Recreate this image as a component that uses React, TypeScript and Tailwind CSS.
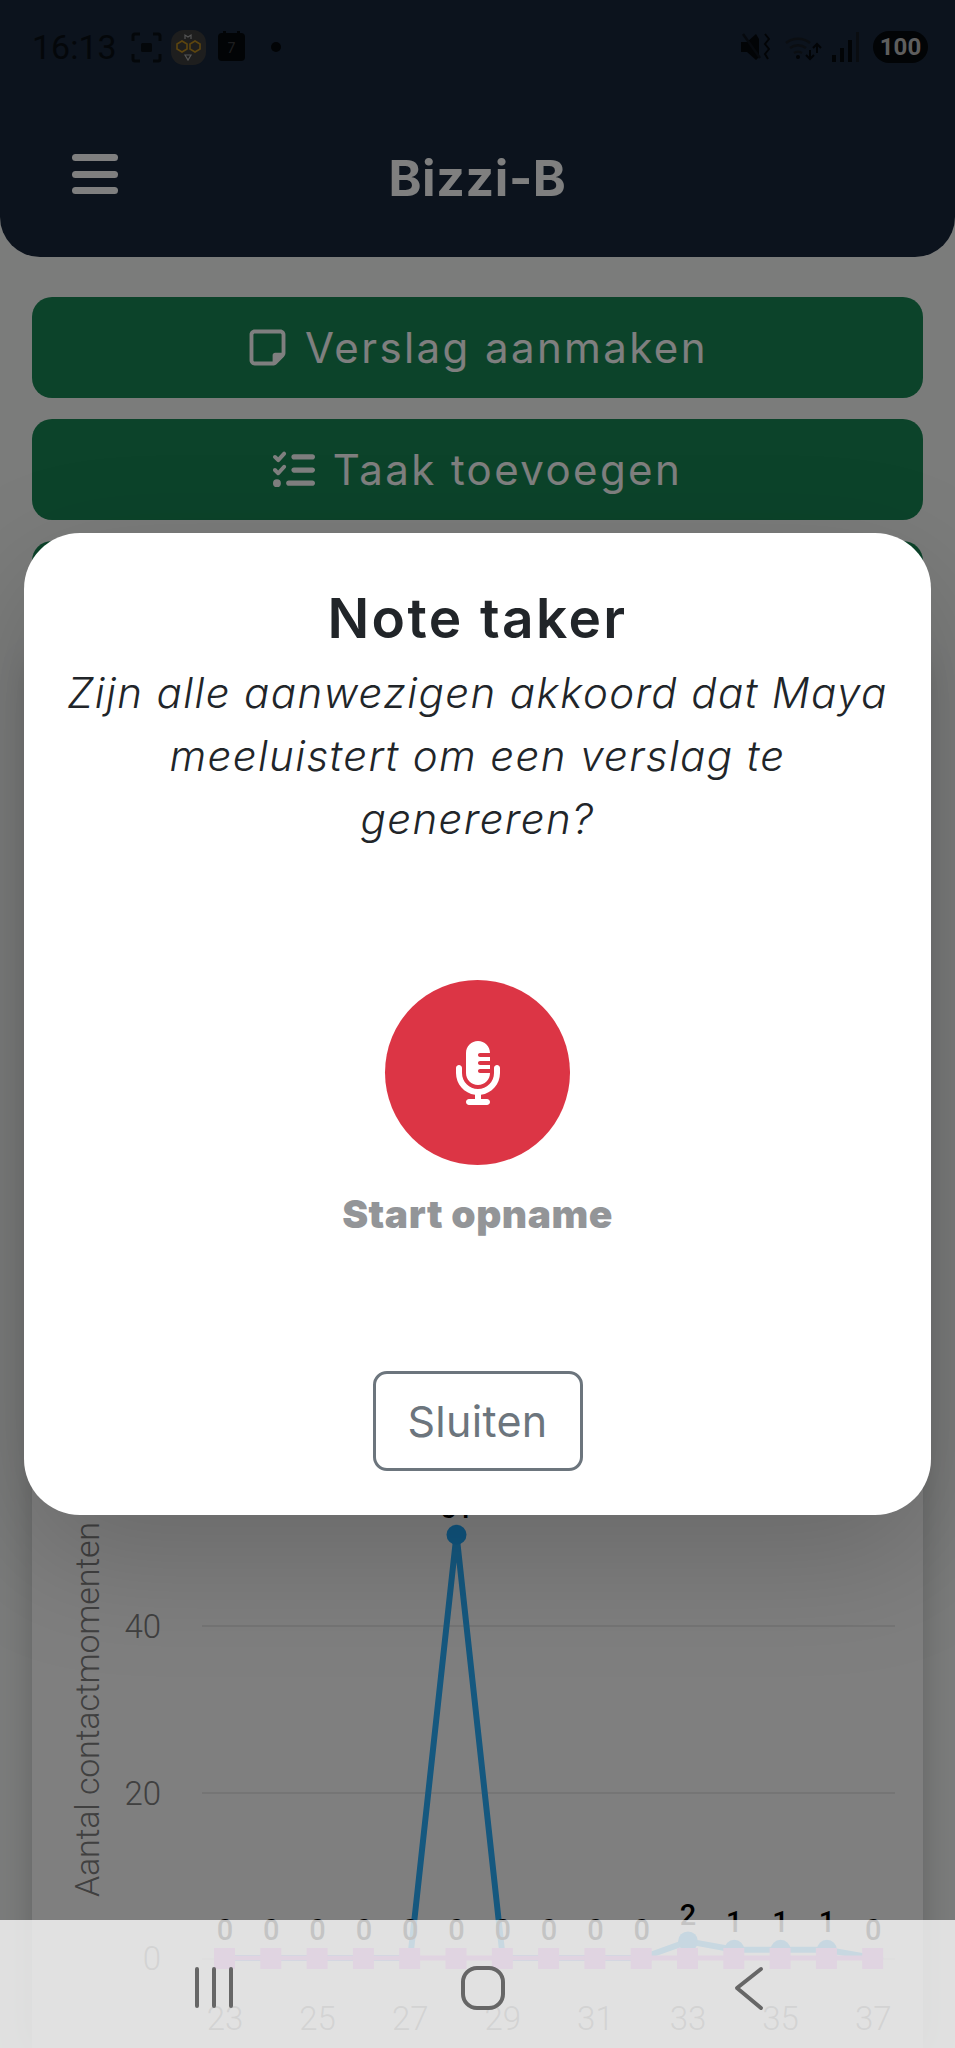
import React from 'react'
import { FaListCheck, FaMicrophoneLines, FaRegNoteSticky } from 'react-icons/fa6'

const FONT = 'font-["Inter","Noto_Sans",sans-serif]'

// chart data: week numbers 23..37
const xAt = (i: number) => 225 + i * 46.3
const yAt = (v: number) => 1958 - v * 8.3
const contacts = [0, 0, 0, 0, 0, 51, 0, 0, 0, 0, 2, 1, 1, 1, 0]

function StatusBar() {
  return (
    <div className="flex h-[94px] items-center justify-between pl-[32px] pr-[27px]">
      <div className="flex items-center">
        <span className='font-["Roboto",sans-serif] text-[34px] leading-none text-[#090e14] w-[100px]'>16:13</span>
        <svg width="31" height="31" viewBox="0 0 31 31" fill="none" stroke="#090e14" strokeWidth="3" className="ml-[-1px]">
          <path d="M2 9V4q0-2 2-2h5M22 2h5q2 0 2 2v5M29 22v5q0 2-2 2h-5M9 29H4q-2 0-2-2v-5" />
          <rect x="10" y="11" width="11" height="9" rx="1.5" fill="#090e14" stroke="none" />
        </svg>
        <svg width="35" height="35" viewBox="0 0 35 35" fill="none" className="ml-[9px]">
          <rect width="35" height="35" rx="13" fill="#3c3c3c" />
          <path d="M11 11l5 3v5l-5 3-5-3v-5zM24 11l5 3v5l-5 3-5-3v-5z" stroke="#b98a1e" strokeWidth="1.6" />
          <path d="M14 9V5l3 2 3-2v4M14 25h6l-3 5z" stroke="#a8a8a8" strokeWidth="1.2" />
        </svg>
        <div className="ml-[12px] relative flex h-[28px] w-[27px] items-center justify-center rounded-[4px] bg-[#05080c] text-[14px] text-[#3a3d40]">
          7
          <span className="absolute -top-[2px] left-[5px] h-[5px] w-[3px] bg-[#05080c]" />
          <span className="absolute -top-[2px] right-[5px] h-[5px] w-[3px] bg-[#05080c]" />
        </div>
        <span className="ml-[26px] size-[10px] rounded-full bg-[#05080c]" />
      </div>
      <div className="flex items-center">
        <svg width="29" height="30" viewBox="0 0 29 30" fill="#05080c">
          <path d="M0 10h6l9-8 3 5v18l-3 3-9-8H0z" />
          <path d="M2 2l17 24" stroke="#0c131c" strokeWidth="2.5" />
          <path d="M24 2l4 5-4 5 4 5-4 5 3 5" fill="none" stroke="#05080c" strokeWidth="2" />
        </svg>
        <svg width="38" height="30" viewBox="0 0 38 30" fill="none" stroke="#161c24" strokeWidth="2.4" className="ml-[14px]">
          <path d="M2 11a19 19 0 0 1 24 0M6 16a13 13 0 0 1 16 0M10 21a7 7 0 0 1 8 0" />
          <path d="M33 12v9M29 16l4-4 4 4M26 18v9M22 23l4 4 4-4" stroke="#05080c" strokeWidth="2" />
          <circle cx="14" cy="25" r="2" fill="#05080c" stroke="none" />
        </svg>
        <svg width="28" height="30" viewBox="0 0 28 30" fill="#05080c" className="ml-[10px]">
          <rect x="0" y="23" width="4" height="7" />
          <rect x="8" y="16" width="4" height="14" />
          <rect x="16" y="8" width="4" height="22" />
          <rect x="24" y="0" width="3" height="30" fill="#151b22" />
        </svg>
        <span className='ml-[13px] flex h-[32px] w-[55px] items-center justify-center rounded-full bg-[#05080c] font-["Roboto",sans-serif] text-[24px] font-bold text-[#bcbcbc]'>100</span>
      </div>
    </div>
  )
}

function Chart() {
  const blue = contacts.map((v, i) => `${xAt(i)},${yAt(v)}`).join(' ')
  return (
    <svg viewBox="32 1448 891 600" width="891" height="600" className="block">
      <line x1="202" x2="895" y1="1626" y2="1626" stroke="#e4e4e4" strokeWidth="1.5" />
      <line x1="202" x2="895" y1="1793" y2="1793" stroke="#e4e4e4" strokeWidth="1.5" />
      <line x1="202" x2="895" y1="1959" y2="1959" stroke="#e4e4e4" strokeWidth="1.5" />
      <g fontFamily="Roboto, sans-serif" fontWeight="300" fontSize="33" fill="#808080">
        <text x="161" y="1638" textAnchor="end">40</text>
        <text x="161" y="1805" textAnchor="end">20</text>
        <text x="161" y="1970" textAnchor="end">0</text>
        {[23, 25, 27, 29, 31, 33, 35, 37].map((w, k) => (
          <text key={w} x={xAt(k * 2)} y="2030" textAnchor="middle">{w}</text>
        ))}
      </g>
      <text
        transform="translate(99 1897) rotate(-90)"
        fontFamily="Roboto, sans-serif"
        fontWeight="300"
        fontSize="34"
        textLength="375"
        fill="#808080"
      >
        Aantal contactmomenten
      </text>
      <polyline points={blue} fill="none" stroke="#2bb0ff" strokeWidth="6" />
      {contacts.map((v, i) => (
        <circle key={i} cx={xAt(i)} cy={yAt(v)} r="10" fill="#20aaff" />
      ))}
      <line x1={xAt(0)} x2={xAt(14)} y1="1958" y2="1958" stroke="#f48aff" strokeWidth="5" />
      {contacts.map((_, i) => (
        <rect key={i} x={xAt(i) - 11} y="1948" width="21" height="21" fill="#f48aff" />
      ))}
      <g fontFamily="Roboto, sans-serif" fontWeight="500" fontSize="29" fill="#000" textAnchor="middle">
        {contacts.map((v, i) => (
          <text key={i} x={xAt(i)} y={v === 2 ? 1925 : v === 1 ? 1932 : 1940}>{v === 51 ? 0 : v}</text>
        ))}
        <text x={xAt(5)} y="1518">51</text>
      </g>
    </svg>
  )
}

function NavBar() {
  return (
    <div className="absolute bottom-0 left-0 right-0 h-[128px] bg-white/[0.77]">
      <svg width="955" height="128" viewBox="0 1920 955 128" fill="none" stroke="#666" strokeWidth="4" strokeLinecap="round" strokeLinejoin="round">
        <path d="M197 1969v37M214 1969v37M231 1969v37" />
        <rect x="463" y="1968" width="40" height="40" rx="14" />
        <path d="M761 1969l-24 19 24 20" />
      </svg>
    </div>
  )
}

export default function App() {
  return (
    <div className={`relative h-[2048px] w-[955px] overflow-hidden bg-[#f6f8f7] ${FONT}`}>
      <div className="flex h-full flex-col">
        <header className="h-[257px] rounded-b-[40px] bg-[#18263a] text-white">
          <StatusBar />
          <div className="grid grid-cols-[1fr_auto_1fr] items-center pt-[58px] pl-[72px]">
            <div className="-mt-[8px] flex flex-col gap-[9.5px]">
              <span className="h-[7px] w-[46px] rounded-full bg-white" />
              <span className="h-[7px] w-[46px] rounded-full bg-white" />
              <span className="h-[7px] w-[46px] rounded-full bg-white" />
            </div>
            <span className="-ml-[72px] text-[50px] font-bold leading-[52px] tracking-[0.6px]">Bizzi-B</span>
          </div>
        </header>
        <main className="flex flex-1 flex-col gap-[21px] px-[32px] pt-[40px]">
          <button className="flex h-[101px] items-center justify-center gap-[17px] rounded-[20px] bg-[#198754] text-[42px] tracking-[2.4px] text-white">
            <FaRegNoteSticky className="size-[41px]" />
            Verslag aanmaken
          </button>
          <button className="flex h-[101px] items-center justify-center gap-[18px] rounded-[20px] bg-[#198754] text-[42px] tracking-[2.4px] text-white">
            <FaListCheck className="size-[42px]" />
            Taak toevoegen
          </button>
          <div className="h-[101px] rounded-[20px] bg-[#198754]" />
          <section className="flex flex-1 items-end bg-white shadow-[0_0_32px_rgba(0,0,0,0.2)]">
            <Chart />
          </section>
        </main>
      </div>

      {/* dimmed backdrop and dialog */}
      <div className="absolute inset-0 bg-black/50" />
      <div className="absolute left-[24px] top-[533px] flex h-[982px] w-[907px] flex-col items-center rounded-[56px] bg-white shadow-[0_42px_125px_rgba(0,0,0,0.175)]">
        <h2 className="mt-[52px] text-[55px] font-semibold leading-[66px] tracking-[2.4px] text-[#212529]">Note taker</h2>
        <p className="mt-[10px] w-[830px] text-center text-[42px] font-light italic leading-[63px] tracking-[1.4px] text-[#212529]">
          Zijn alle aanwezigen akkoord dat Maya meeluistert om een verslag te genereren?
        </p>
        <button className="mt-[130px] flex size-[185px] items-center justify-center rounded-full bg-[#dc3545] text-white">
          <FaMicrophoneLines className="h-[64px] w-[48px]" />
        </button>
        <span className="mt-[25px] text-[39px] font-black leading-[48px] tracking-[0.5px] text-[#939598]">Start opname</span>
        <button className="mt-[133px] flex h-[100px] w-[210px] items-center justify-center rounded-[14px] border-[3px] border-[#6c757d] text-[43px] leading-none tracking-[0.3px] text-[#6c757d]">
          Sluiten
        </button>
      </div>

      <NavBar />
    </div>
  )
}
